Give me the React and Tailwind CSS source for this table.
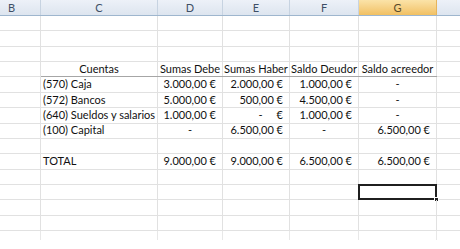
import React from "react";

const widths = [41, 117, 65, 67, 69, 78];

function HeaderRow() {
  const letters = ["B", "C", "D", "E", "F", "G"];
  return (
    <div className="flex h-[16px] border-b border-[#9eb6ce]">
      {letters.map((l, i) => (
        <div
          key={l}
          style={{ width: widths[i] }}
          className={
            "shrink-0 border-r flex items-center text-[11px] leading-none " +
            (i === 0 ? "pl-[8px] " : "justify-center ") +
            (l === "G"
              ? "bg-gradient-to-b from-[#fbe3a8] to-[#f1c062] border-[#e6b45a] text-[#5a4a2a]"
              : "bg-gradient-to-b from-[#edf1f8] to-[#dde5ef] border-[#c7d3e1] text-[#3e4f66]")
          }
        >
          {l}
        </div>
      ))}
      <div className="flex-1 bg-gradient-to-b from-[#edf1f8] to-[#dde5ef]" />
    </div>
  );
}

const rows = [
  [],
  [],
  [],
  [
    { t: "Cuentas", a: "c" },
    { t: "Sumas Debe", a: "c" },
    { t: "Sumas Haber", a: "c" },
    { t: "Saldo Deudor", a: "c" },
    { t: "Saldo acreedor", a: "c" },
  ],
  [
    { t: "(570) Caja", a: "l" },
    { t: "3.000,00 €", a: "r" },
    { t: "2.000,00 €", a: "r" },
    { t: "1.000,00 €", a: "r" },
    { t: "-", a: "c" },
  ],
  [
    { t: "(572) Bancos", a: "l" },
    { t: "5.000,00 €", a: "r" },
    { t: "500,00 €", a: "r" },
    { t: "4.500,00 €", a: "r" },
    { t: "-", a: "c" },
  ],
  [
    { t: "(640) Sueldos y salarios", a: "l" },
    { t: "1.000,00 €", a: "r" },
    { t: "dash", a: "r" },
    { t: "1.000,00 €", a: "r" },
    { t: "-", a: "c" },
  ],
  [
    { t: "(100) Capital", a: "l" },
    { t: "-", a: "c" },
    { t: "6.500,00 €", a: "r" },
    { t: "-", a: "c" },
    { t: "6.500,00 €", a: "r" },
  ],
  [],
  [
    { t: "TOTAL", a: "l" },
    { t: "9.000,00 €", a: "r" },
    { t: "9.000,00 €", a: "r" },
    { t: "6.500,00 €", a: "r" },
    { t: "6.500,00 €", a: "r" },
  ],
  [],
  [],
  [],
  [],
];

function Cell({ w, cell, bottomDark, selected }) {
  let content = null;
  let align = "";
  if (cell) {
    if (cell.a === "c") align = "justify-center";
    else if (cell.a === "r") align = "justify-end pr-[6px]";
    else align = "pl-[2px]";
    content =
      cell.t === "dash" ? (
        <span className="flex w-full justify-end pr-[6px]">
          <span className="mr-[14px]">-</span>
          <span>€</span>
        </span>
      ) : (
        cell.t
      );
  }
  return (
    <div
      style={{ width: w }}
      className={
        "relative shrink-0 h-full border-r border-[#e1e1e1] flex items-center whitespace-nowrap " +
        (cell && cell.t === "dash" ? "" : align)
      }
    >
      {content}
      {bottomDark && (
        <div className="absolute left-0 right-[-1px] bottom-[-1px] h-[1px] bg-[#a6a6a6]" />
      )}
      {selected && (
        <div className="absolute left-[-1px] top-[-1px] right-[-1px] bottom-[-1px] border-2 border-[#1f1f1f]">
          <div className="absolute right-[-4px] bottom-[-4px] w-[5px] h-[5px] bg-[#1f1f1f] border border-white" />
        </div>
      )}
    </div>
  );
}

export default function App() {
  return (
    <div
      className="w-[460px] h-[249px] bg-white overflow-hidden text-[11px] text-[#111]"
      style={{ fontFamily: "Lato, 'Liberation Sans', sans-serif" }}
    >
      <HeaderRow />
      {rows.map((r, ri) => (
        <div key={ri} className="flex h-[15.36px] border-b border-[#e1e1e1]">
          <Cell w={widths[0]} />
          {[0, 1, 2, 3, 4].map((ci) => (
            <Cell
              key={ci}
              w={widths[ci + 1]}
              cell={r[ci]}
              bottomDark={ri === 3}
              selected={ri === 11 && ci === 4}
            />
          ))}
          <div className="flex-1" />
        </div>
      ))}
      <div className="flex h-[9px]">
        {widths.map((w, i) => (
          <div key={i} style={{ width: w }} className="shrink-0 border-r border-[#e8e8e8]" />
        ))}
      </div>
    </div>
  );
}
